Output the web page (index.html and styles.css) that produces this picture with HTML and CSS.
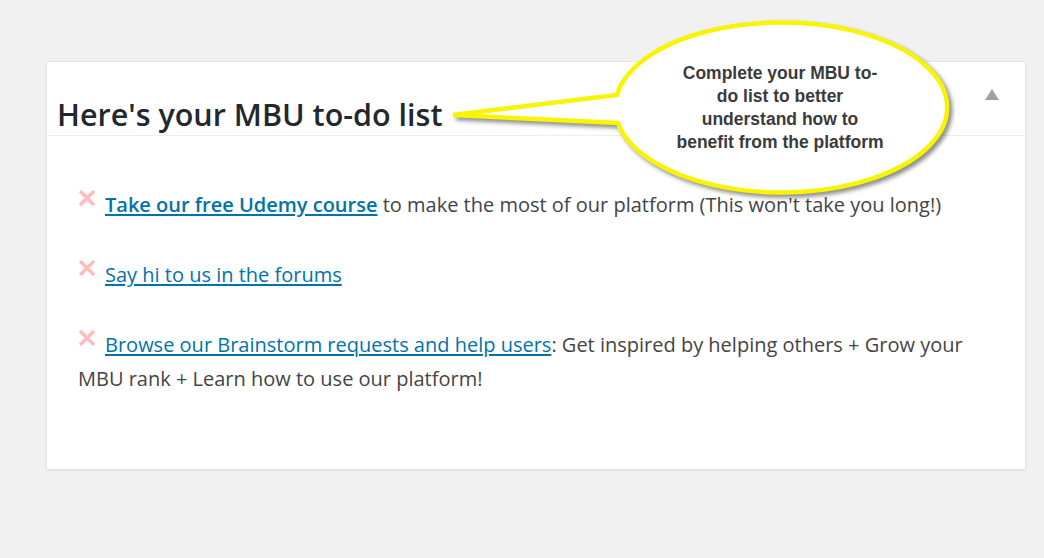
FILE: index.html
```html
<!DOCTYPE html>
<html>
<head>
<meta charset="utf-8">
<link rel="stylesheet" href="styles.css">
</head>
<body>
<div class="card">
  <div class="card-head">
    <h2 class="card-title">Here's your MBU to-do list</h2>
    <span class="toggle"></span>
  </div>
  <div class="card-body">
    <p class="todo"><svg class="xmark" width="18" height="16" viewBox="0 0 18 16"><path d="M2 1 L16 15 M16 1 L2 15" stroke="#ffbcbc" stroke-width="3.4" fill="none"/></svg><a class="link strong" href="#">Take our free Udemy course</a> to make the most of our platform (This won't take you long!)</p>
    <p class="todo"><svg class="xmark" width="18" height="16" viewBox="0 0 18 16"><path d="M2 1 L16 15 M16 1 L2 15" stroke="#ffbcbc" stroke-width="3.4" fill="none"/></svg><a class="link" href="#">Say hi to us in the forums</a></p>
    <p class="todo"><svg class="xmark" width="18" height="16" viewBox="0 0 18 16"><path d="M2 1 L16 15 M16 1 L2 15" stroke="#ffbcbc" stroke-width="3.4" fill="none"/></svg><a class="link" href="#">Browse our Brainstorm requests and help users</a>: Get inspired by helping others + Grow your MBU rank + Learn how to use our platform!</p>
  </div>
</div>
<div class="callout">
  <svg class="callout-shape" width="1044" height="558" viewBox="0 0 1044 558">
    <path d="M617 95 A166 85 0 1 1 618 123 L453 115 Z" fill="#ffffff" stroke="#f9f400" stroke-width="4.5" stroke-linejoin="miter"/>
  </svg>
  <div class="callout-text">Complete your MBU to-<br>do list to better<br>understand how to<br>benefit from the platform</div>
</div>
</body>
</html>
```

FILE: styles.css
```css
html, body {
  margin: 0;
  padding: 0;
}
body {
  background: #f1f1f1;
  width: 1044px;
  height: 558px;
  overflow: hidden;
  position: relative;
  font-family: "Open Sans", "Noto Sans", sans-serif;
  color: #444;
}
.card {
  margin: 61px 0 0 46px;
  width: 980px;
  height: 409px;
  box-sizing: border-box;
  background: #fff;
  border: 1px solid #e5e5e5;
  box-shadow: 0 1px 2px rgba(0, 0, 0, 0.06);
}
.card-head {
  display: flex;
  justify-content: space-between;
  align-items: flex-end;
  height: 74px;
  box-sizing: border-box;
  padding: 0 26px 7px 10px;
  border-bottom: 1px solid #eeeeee;
}
.card-title {
  margin: 0;
  font-size: 30.5px;
  line-height: 28px;
  font-weight: 600;
  color: #23282d;
}
.toggle {
  align-self: flex-start;
  margin-top: 27px;
  width: 0;
  height: 0;
  border-left: 7px solid transparent;
  border-right: 7px solid transparent;
  border-bottom: 11px solid #a0a0a0;
}
.card-body {
  padding: 52px 31px 0 31px;
}
.todo {
  margin: 0 0 36px 0;
  font-size: 20px;
  line-height: 34px;
}
.xmark {
  vertical-align: 6px;
  margin-right: 9px;
}
.link {
  color: #0073aa;
  text-decoration: underline;
  text-underline-offset: 2px;
}
.strong {
  font-weight: 600;
}
.callout {
  position: absolute;
  left: 0;
  top: 0;
  width: 1044px;
  height: 558px;
  pointer-events: none;
}
.callout-shape {
  position: absolute;
  left: 0;
  top: 0;
  filter: drop-shadow(3px 3px 2px rgba(0, 0, 0, 0.45));
}
.callout-text {
  position: absolute;
  left: 640px;
  top: 62px;
  width: 280px;
  text-align: center;
  font-family: "Liberation Sans", Arial, sans-serif;
  font-weight: bold;
  font-size: 17.5px;
  line-height: 23px;
  color: #3b3b3b;
}
```
